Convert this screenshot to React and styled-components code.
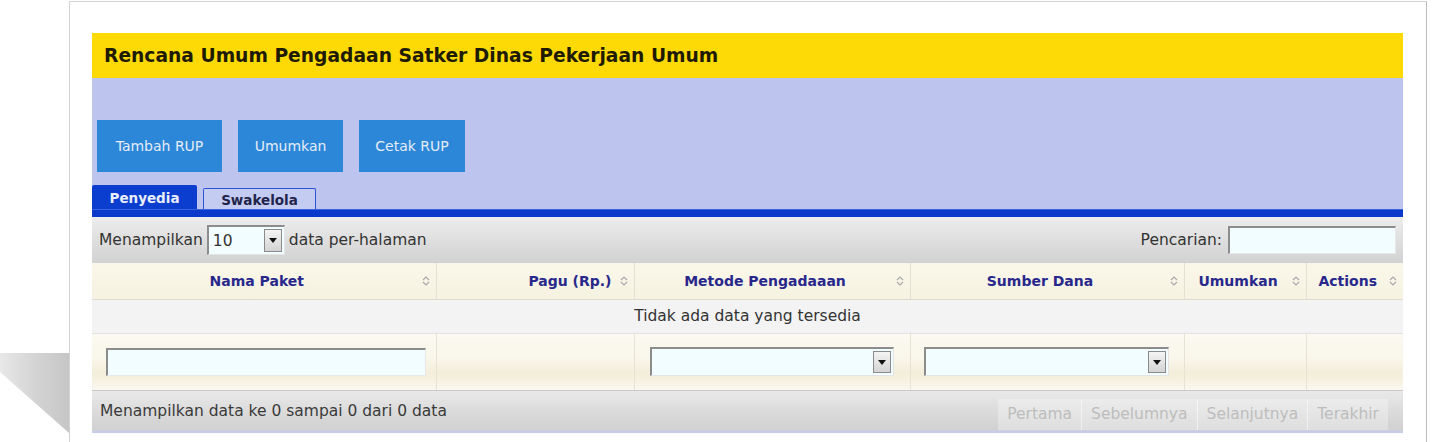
import React from "react";
import styled, { createGlobalStyle } from "styled-components";

const Global = createGlobalStyle`
  html, body { margin: 0; padding: 0; background: #ffffff; }
  body { font-family: "DejaVu Sans", Verdana, sans-serif; }
  * { box-sizing: border-box; }
`;

const Page = styled.div`
  display: flex;
  align-items: flex-start;
  height: 442px;
  overflow: hidden;
`;

const Gutter = styled.div`
  flex: 0 0 69px;
  height: 442px;
  display: flex;
  flex-direction: column;
  justify-content: flex-end;
`;

const Card = styled.div`
  flex: 0 0 1358px;
  margin-top: 1px;
  height: 460px;
  border: 1px solid #d2d2d2;
  border-right-color: #bdbdbd;
  background: #ffffff;
  padding: 31px 23px 0 22px;
`;

const TitleBar = styled.div`
  height: 45px;
  background: #fdd906;
  display: flex;
  align-items: center;
  padding-left: 12px;
  font-size: 18.7px;
  font-weight: bold;
  color: #1e1b02;
`;

const Panel = styled.div`
  background: #bdc5ee;
  height: 131px;
  padding-top: 42px;
  display: flex;
  flex-direction: column;
`;

const ButtonRow = styled.div`
  display: flex;
  gap: 16px;
  padding-left: 5px;
`;

const ActionButton = styled.button`
  width: ${(p) => p.$w}px;
  height: 52px;
  border: none;
  background: #2c87d8;
  color: #e4ecf7;
  font-family: "DejaVu Sans", Verdana, sans-serif;
  font-size: 14px;
  padding: 0;
  cursor: pointer;
`;

const TabRow = styled.div`
  margin-top: auto;
  display: flex;
  align-items: flex-end;
  gap: 6px;
`;

const Tab = styled.div`
  width: ${(p) => p.$w}px;
  height: ${(p) => (p.$active ? 24 : 21)}px;
  display: flex;
  align-items: center;
  justify-content: center;
  font-size: 13.5px;
  font-weight: bold;
  border-radius: 2px 2px 0 0;
  background: ${(p) => (p.$active ? "#0b3dce" : "#c4ccf2")};
  color: ${(p) => (p.$active ? "#e9eefc" : "#22244a")};
  border: ${(p) => (p.$active ? "none" : "1px solid #2f52d4")};
  border-bottom: none;
  padding-top: ${(p) => (p.$active ? 2 : 1)}px;
`;

const BlueBar = styled.div`
  height: 8px;
  background: #0a39cc;
  border-top: 1px solid #3b63dc;
`;

const Toolbar = styled.div`
  height: 46px;
  background: linear-gradient(#ededed, #dcdcdc 60%, #d2d2d2);
  display: flex;
  align-items: center;
  padding: 0 7px;
  font-size: 15.5px;
  color: #333;
`;

const Spacer = styled.div`
  flex: 1;
`;

const SelectBox = styled.div`
  width: ${(p) => p.$w}px;
  height: ${(p) => p.$h}px;
  margin: 0 ${(p) => p.$mx || 0}px;
  background: #f1fdff;
  border-top: 2px solid #8c8c8c;
  border-left: 2px solid #8c8c8c;
  border-right: 1px solid #e4e4e4;
  border-bottom: 1px solid #e4e4e4;
  display: flex;
  align-items: center;
  padding-left: 4px;
  font-size: 15.5px;
  color: #333;
`;

const SelectValue = styled.span`
  flex: 1;
`;

const ArrowBtn = styled.span`
  width: 18px;
  height: ${(p) => p.$h}px;
  margin-right: 2px;
  background: linear-gradient(#f4f4f4, #d4d4d4);
  border: 1px solid #8a8a8a;
  display: flex;
  align-items: center;
  justify-content: center;
`;

const TextInput = styled.div`
  width: ${(p) => p.$w}px;
  height: ${(p) => p.$h}px;
  margin-left: ${(p) => p.$ml || 0}px;
  background: #f1fdff;
  border-top: 2px solid #8c8c8c;
  border-left: 2px solid #8c8c8c;
  border-right: 1px solid #e8e8e8;
  border-bottom: 1px solid #e8e8e8;
`;

const Table = styled.table`
  width: 1311px;
  border-collapse: collapse;
  table-layout: fixed;
`;

const HeadCell = styled.th`
  height: 36px;
  padding: 0 6px 0 8px;
  background: linear-gradient(#faf7ea, #f6f2e1);
  border-left: 1px solid #e4e1d4;
  border-bottom: 1px solid #dedbd0;
  &:first-child { border-left: none; }
`;

const HeadInner = styled.div`
  display: flex;
  align-items: center;
  gap: 8px;
`;

const HeadText = styled.span`
  flex: 1;
  text-align: ${(p) => p.$align || "center"};
  font-size: 14px;
  font-weight: bold;
  color: #28288c;
  white-space: nowrap;
`;

const EmptyCell = styled.td`
  height: 34px;
  background: #f3f3f3;
  text-align: center;
  font-size: 15.5px;
  color: #333;
  border-bottom: 1px solid #e2e2e2;
`;

const FilterCell = styled.td`
  height: 57px;
  padding: 0;
  background: linear-gradient(#fbf9f1 0%, #f9f6ea 45%, #f3edd9 72%, #faf7ee 100%);
  border-left: 1px solid #e6e2d4;
  vertical-align: middle;
  &:first-child { border-left: none; }
`;

const Footer = styled.div`
  height: 43px;
  background: linear-gradient(#e9e9e9, #d9d9d9 60%, #d0d0d0);
  border-top: 1px solid #c8c8c8;
  border-bottom: 2px solid #c3cbef;
  display: flex;
  align-items: center;
  padding: 0 15px 0 8px;
  font-size: 15.5px;
  color: #3a3a3a;
`;

const Pager = styled.div`
  display: flex;
  height: 31px;
  margin-top: 6px;
  background: rgba(255, 255, 255, 0.3);
`;

const PageBtn = styled.span`
  display: flex;
  align-items: center;
  padding: 0 9px;
  font-size: 15.5px;
  color: #bdbdbd;
  border-left: 1px solid rgba(255, 255, 255, 0.5);
  &:first-child { border-left: none; }
`;

const SortIcon = () => (
  <svg width="8" height="12" viewBox="0 0 8 12" style={{ flex: "none" }}>
    <path d="M1 5 L4 2 L7 5 M1 7 L4 10 L7 7" fill="none" stroke="#a9a9a9" strokeWidth="1.2" />
  </svg>
);

const Caret = () => (
  <svg width="8" height="5" viewBox="0 0 8 5">
    <path d="M0 0 H8 L4 5 Z" fill="#111" />
  </svg>
);

const Shadow = () => (
  <svg width="69" height="92" viewBox="0 0 69 92">
    <defs>
      <linearGradient id="sh" x1="0" y1="0" x2="1" y2="0">
        <stop offset="0" stopColor="#e8e8e8" />
        <stop offset="0.5" stopColor="#d4d4d4" />
        <stop offset="1" stopColor="#c6c6c6" />
      </linearGradient>
    </defs>
    <polygon points="0,3 69,3 69,83 0,22" fill="url(#sh)" />
  </svg>
);

const columns = [
  { label: "Nama Paket", w: 344 },
  { label: "Pagu (Rp.)", w: 198, align: "right" },
  { label: "Metode Pengadaaan", w: 276 },
  { label: "Sumber Dana", w: 274 },
  { label: "Umumkan", w: 122 },
  { label: "Actions", w: 97 },
];

const Dropdown = ({ w, ml }) => (
  <SelectBox $w={w} $h={29} style={{ marginLeft: ml }}>
    <SelectValue />
    <ArrowBtn $h={22}>
      <Caret />
    </ArrowBtn>
  </SelectBox>
);

export default function App() {
  return (
    <>
      <Global />
      <Page>
        <Gutter>
          <Shadow />
        </Gutter>
        <Card>
          <TitleBar>Rencana Umum Pengadaan Satker Dinas Pekerjaan Umum</TitleBar>
          <Panel>
            <ButtonRow>
              <ActionButton $w={125}>Tambah RUP</ActionButton>
              <ActionButton $w={105}>Umumkan</ActionButton>
              <ActionButton $w={106}>Cetak RUP</ActionButton>
            </ButtonRow>
            <TabRow>
              <Tab $active $w={105}>Penyedia</Tab>
              <Tab $w={113}>Swakelola</Tab>
            </TabRow>
          </Panel>
          <BlueBar />
          <Toolbar>
            <span>Menampilkan</span>
            <SelectBox $w={78} $h={30} $mx={4}>
              <SelectValue>10</SelectValue>
              <ArrowBtn $h={23}>
                <Caret />
              </ArrowBtn>
            </SelectBox>
            <span>data per-halaman</span>
            <Spacer />
            <span>Pencarian:</span>
            <TextInput $w={168} $h={28} $ml={6} />
          </Toolbar>
          <Table>
            <colgroup>
              {columns.map((c) => (
                <col key={c.label} style={{ width: c.w }} />
              ))}
            </colgroup>
            <thead>
              <tr>
                {columns.map((c) => (
                  <HeadCell key={c.label}>
                    <HeadInner>
                      <HeadText $align={c.align}>{c.label}</HeadText>
                      <SortIcon />
                    </HeadInner>
                  </HeadCell>
                ))}
              </tr>
            </thead>
            <tbody>
              <tr>
                <EmptyCell colSpan={6}>Tidak ada data yang tersedia</EmptyCell>
              </tr>
              <tr>
                <FilterCell>
                  <TextInput $w={320} $h={28} $ml={14} />
                </FilterCell>
                <FilterCell />
                <FilterCell>
                  <Dropdown w={244} ml={15} />
                </FilterCell>
                <FilterCell>
                  <Dropdown w={245} ml={13} />
                </FilterCell>
                <FilterCell />
                <FilterCell />
              </tr>
            </tbody>
          </Table>
          <Footer>
            <span>Menampilkan data ke 0 sampai 0 dari 0 data</span>
            <Spacer />
            <Pager>
              <PageBtn>Pertama</PageBtn>
              <PageBtn>Sebelumnya</PageBtn>
              <PageBtn>Selanjutnya</PageBtn>
              <PageBtn>Terakhir</PageBtn>
            </Pager>
          </Footer>
        </Card>
      </Page>
    </>
  );
}
